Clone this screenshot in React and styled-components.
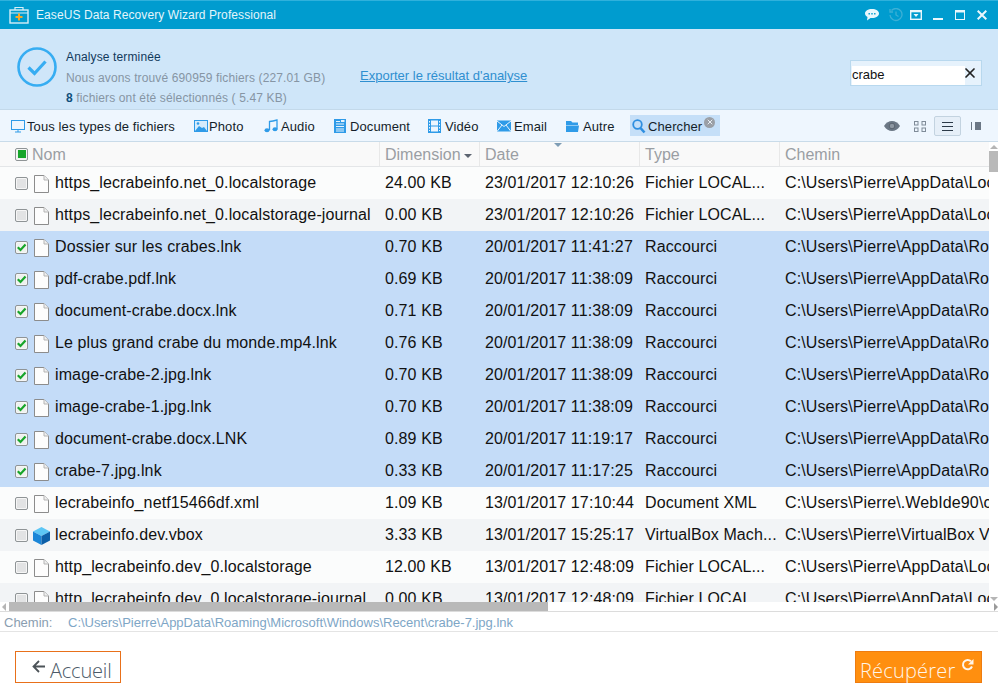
import React from 'react'
import styled, { createGlobalStyle } from 'styled-components'
import { X } from 'lucide-react'

const GlobalStyle = createGlobalStyle`
  html, body { margin: 0; padding: 0; background: #fff; }
  body { font-family: "Liberation Sans", Arial, sans-serif; }
  * { box-sizing: border-box; }
`

const Window = styled.div`
  width: 998px;
  height: 698px;
  display: flex;
  flex-direction: column;
  overflow: hidden;
  background: #fff;
`

const TitleBar = styled.div`
  height: 29px;
  flex: none;
  display: flex;
  align-items: center;
  padding: 0 11px 0 9px;
  background: #009ccf;
  border-top: 1px solid #2fb1dc;
  color: #e4f5fb;
  font-size: 12px;
  letter-spacing: 0.08px;
`

const TitleText = styled.span`
  margin-left: 7px;
  flex: 1;
`

const WinIcon = styled.span`
  display: flex;
  margin-left: ${p => p.$ml}px;
`

const Header = styled.div`
  height: 81px;
  flex: none;
  display: flex;
  align-items: flex-start;
  padding: 18px 16px 0 17px;
  background: #cfe6f9;
  border-bottom: 1px solid #c3d9ea;
`

const Summary = styled.div`
  display: flex;
  flex-direction: column;
  margin-left: 9px;
  width: 294px;
  font-size: 12px;
  line-height: 20.5px;
  letter-spacing: 0.13px;
  color: #8695a4;
`

const SummaryTitle = styled.div`
  color: #123a5c;
`

const Count = styled.b`
  color: #0f4f7c;
`

const ExportLink = styled.a`
  flex: 1;
  margin-top: 21px;
  line-height: 15px;
  font-size: 13px;
  color: #2f8fd0;
  text-decoration: underline;
`

const SearchBox = styled.div`
  width: 132px;
  height: 26px;
  margin-top: 13px;
  display: flex;
  align-items: flex-end;
  padding-left: 1px;
  background: #e6f2fc;
  border: 1px solid #b8d8ee;
  font-size: 13px;
  color: #111;
`

const SearchValue = styled.span`
  display: block;
  width: 113px;
  height: 19px;
  line-height: 17px;
  background: #fff;
`

const SearchClear = styled.span`
  display: flex;
  align-self: flex-start;
  margin: 4px 0 0 -3px;
`

const Toolbar = styled.div`
  height: 32px;
  flex: none;
  display: flex;
  align-items: center;
  padding: 1px 0 0 11px;
  background: #eef6fe;
  border-bottom: 1px solid #c9dbe9;
  font-size: 13px;
  letter-spacing: 0.1px;
  color: #141e2a;
`

const Filter = styled.div`
  width: ${p => p.$width}px;
  height: 22px;
  flex: none;
  display: flex;
  align-items: center;
  gap: ${p => p.$iconGap}px;
  white-space: nowrap;
`

const SearchFilter = styled.div`
  position: relative;
  width: 90px;
  height: 21px;
  margin-top: -2px;
  display: flex;
  align-items: center;
  gap: 2px;
  padding: 2px 0 0 2px;
  background: #c5dff8;
`

const FilterClose = styled.span`
  position: absolute;
  right: 5px;
  top: 2px;
  width: 11px;
  height: 11px;
  display: flex;
  align-items: center;
  justify-content: center;
  border-radius: 50%;
  background: #9a9fa6;
`

const ViewTools = styled.div`
  margin-left: auto;
  margin-right: 17px;
  display: flex;
  align-items: center;
`

const ToolIcon = styled.span`
  display: flex;
  margin-left: ${p => p.$ml || 0}px;
`

const ActiveToggle = styled.span`
  width: 27px;
  height: 20px;
  display: flex;
  align-items: center;
  justify-content: center;
  margin-left: 8px;
  background: #e6eff8;
  border: 1px solid #c3d3e0;
  border-radius: 2px;
`

const TableArea = styled.div`
  position: relative;
  height: 469px;
  flex: none;
  overflow: hidden;
`

const HeadRow = styled.div`
  height: 25px;
  display: grid;
  grid-template-columns: 379px 100px 160px 140px 210px;
  background: #f9f9f9;
  border-bottom: 1px solid #e4e6e8;
  font-size: 16px;
  color: #9a9ea3;
`

const HeadCell = styled.div`
  position: relative;
  display: flex;
  align-items: center;
  gap: ${p => (p.$first ? 4 : 3)}px;
  padding-top: 2px;
  padding-left: ${p => (p.$first ? 15 : 5)}px;
  border-left: ${p => (p.$first ? 'none' : '1px solid #e8e8e8')};
`

const HeadBox = styled.span`
  display: flex;
  margin-top: -2px;
`

const SortMark = styled.span`
  position: absolute;
  top: 1px;
  left: 74px;
  width: 0;
  height: 0;
  border-left: 4px solid transparent;
  border-right: 4px solid transparent;
  border-top: 4px solid #7f9db5;
`

const Caret = styled.span`
  width: 0;
  height: 0;
  margin-top: 2px;
  border-left: 4px solid transparent;
  border-right: 4px solid transparent;
  border-top: 4px solid #5c6470;
`

const Rows = styled.div`
  width: 989px;
`

const Row = styled.div`
  height: 32px;
  display: grid;
  grid-template-columns: 379px 100px 160px 140px 210px;
  align-items: center;
  font-size: 16px;
  letter-spacing: 0.12px;
  color: #111;
  white-space: nowrap;
  background: ${p => (p.$selected ? '#c4dcf8' : p.$odd ? '#f2f4f6' : '#fbfcfc')};
`

const NameCell = styled.div`
  display: flex;
  align-items: center;
  padding-left: 15px;
  height: 100%;
`

const IconSlot = styled.span`
  width: 27px;
  display: flex;
  justify-content: center;
  padding-top: 1px;
`

const Cell = styled.div`
  padding-left: 6px;
  overflow: hidden;
`

const Check = styled.span`
  width: 13px;
  height: 13px;
  flex: none;
  display: flex;
  align-items: center;
  justify-content: center;
  background: ${p => (p.$on ? '#eef2ee' : '#e2e3e4')};
  border: 1px solid #8f9496;
  border-radius: 2px;
  box-shadow: inset 0 0 0 1px #f6f6f6;
`

const HeadMark = styled.span`
  width: 8px;
  height: 8px;
  background: #17a52a;
`

const VScroll = styled.div`
  position: absolute;
  top: 0;
  right: 0;
  width: 9px;
  height: 460px;
  background: #fff;
`

const VThumb = styled.div`
  margin-top: 9px;
  height: 21px;
  background: #b9b9b9;
`

const ScrollArrow = styled.span`
  position: absolute;
  left: 1px;
  width: 0;
  height: 0;
  border-left: 4px solid transparent;
  border-right: 4px solid transparent;
  ${p => (p.$up ? 'top: 3px; border-bottom: 4px solid #b5b5b5;' : 'bottom: 1px; border-top: 4px solid #b5b5b5;')}
`

const HScroll = styled.div`
  position: absolute;
  left: 0;
  right: 0;
  bottom: 0;
  height: 9px;
  background: #fff;
`

const HThumb = styled.div`
  width: 539px;
  height: 9px;
  margin-left: 9px;
  background: #b9b9b9;
`

const ArrowLeft = styled.span`
  position: absolute;
  left: 2px;
  top: 1px;
  width: 0;
  height: 0;
  border-top: 4px solid transparent;
  border-bottom: 4px solid transparent;
  border-right: 4px solid #b5b5b5;
`

const ArrowRight = styled.span`
  position: absolute;
  right: 0;
  top: 1px;
  width: 0;
  height: 0;
  border-top: 4px solid transparent;
  border-bottom: 4px solid transparent;
  border-left: 4px solid #9a9a9a;
`

const StatusBar = styled.div`
  height: 21px;
  flex: none;
  display: flex;
  align-items: center;
  padding: 2px 0 0 4px;
  border-top: 1px solid #dcdcdc;
  border-bottom: 1px solid #e4e4e4;
  font-size: 13px;
  color: #8a9db0;
`

const StatusLabel = styled.span`
  width: 64px;
`

const StatusPath = styled.span`
  color: #7ea6c6;
`

const Footer = styled.div`
  flex: 1;
  display: flex;
  align-items: flex-start;
  justify-content: space-between;
  padding: 19px 16px 0 15px;
`

const BackButton = styled.div`
  width: 106px;
  height: 32px;
  display: flex;
  align-items: center;
  padding: 7px 0 0 16px;
  gap: 5px;
  border: 1px solid #e8701a;
  font-family: "Open Sans", sans-serif;
  font-weight: 300;
  font-size: 20px;
  letter-spacing: -0.2px;
  color: #4c5a68;
`

const RecoverButton = styled.div`
  width: 127px;
  height: 32px;
  display: flex;
  align-items: center;
  padding: 7px 0 0 4px;
  gap: 6px;
  background: #ff8f0f;
  border: 1px solid #ee7c10;
  font-family: "Open Sans", sans-serif;
  font-weight: 300;
  font-size: 20px;
  letter-spacing: 0.2px;
  color: #fff6ea;
`

const RaisedIcon = styled.svg`
  flex: none;
  margin-top: -${p => p.$lift}px;
`

const BLUE = '#2f9be8'

const BlueIcon = ({ children, width = 14 }) => (
  <svg width={width} height="14" viewBox={`0 0 ${width} 14`} fill="none">{children}</svg>
)

const FileIcon = () => (
  <svg width="15" height="18" viewBox="0 0 15 18">
    <path d="M.5.5h9.500l4.500 4.500v12.500H.5z" fill="#fdfdfd" stroke="#8c8c8c" />
    <path d="M10 .5V5h4.500" fill="#efefef" stroke="#b5b5b5" />
  </svg>
)

const CubeIcon = () => (
  <svg width="19" height="20" viewBox="0 0 19 20">
    <path d="M9.500 1l8.500 4.500L9.500 10 1 5.500z" fill="#5cc6f5" />
    <path d="M1 5.500L9.500 10v9L1 14.500z" fill="#1a86d8" />
    <path d="M18 5.500L9.500 10v9l8.500-4.500z" fill="#0c5fa8" />
  </svg>
)

const CheckMark = () => (
  <svg width="11" height="11" viewBox="0 0 11 11">
    <path d="M1.800 5.200l2.700 2.800 5-5.500" fill="none" stroke="#17a52a" strokeWidth="2.200" />
  </svg>
)

const files = [
  ['https_lecrabeinfo.net_0.localstorage', '24.00 KB', '23/01/2017 12:10:26', 'Fichier LOCAL...', 'C:\\Users\\Pierre\\AppData\\Local\\Google'],
  ['https_lecrabeinfo.net_0.localstorage-journal', '0.00 KB', '23/01/2017 12:10:26', 'Fichier LOCAL...', 'C:\\Users\\Pierre\\AppData\\Local\\Google'],
  ['Dossier sur les crabes.lnk', '0.70 KB', '20/01/2017 11:41:27', 'Raccourci', 'C:\\Users\\Pierre\\AppData\\Roaming', true],
  ['pdf-crabe.pdf.lnk', '0.69 KB', '20/01/2017 11:38:09', 'Raccourci', 'C:\\Users\\Pierre\\AppData\\Roaming', true],
  ['document-crabe.docx.lnk', '0.71 KB', '20/01/2017 11:38:09', 'Raccourci', 'C:\\Users\\Pierre\\AppData\\Roaming', true],
  ['Le plus grand crabe du monde.mp4.lnk', '0.76 KB', '20/01/2017 11:38:09', 'Raccourci', 'C:\\Users\\Pierre\\AppData\\Roaming', true],
  ['image-crabe-2.jpg.lnk', '0.70 KB', '20/01/2017 11:38:09', 'Raccourci', 'C:\\Users\\Pierre\\AppData\\Roaming', true],
  ['image-crabe-1.jpg.lnk', '0.70 KB', '20/01/2017 11:38:09', 'Raccourci', 'C:\\Users\\Pierre\\AppData\\Roaming', true],
  ['document-crabe.docx.LNK', '0.89 KB', '20/01/2017 11:19:17', 'Raccourci', 'C:\\Users\\Pierre\\AppData\\Roaming', true],
  ['crabe-7.jpg.lnk', '0.33 KB', '20/01/2017 11:17:25', 'Raccourci', 'C:\\Users\\Pierre\\AppData\\Roaming', true],
  ['lecrabeinfo_netf15466df.xml', '1.09 KB', '13/01/2017 17:10:44', 'Document XML', 'C:\\Users\\Pierre\\.WebIde90\\config'],
  ['lecrabeinfo.dev.vbox', '3.33 KB', '13/01/2017 15:25:17', 'VirtualBox Mach...', 'C:\\Users\\Pierre\\VirtualBox VMs'],
  ['http_lecrabeinfo.dev_0.localstorage', '12.00 KB', '13/01/2017 12:48:09', 'Fichier LOCAL...', 'C:\\Users\\Pierre\\AppData\\Local\\Google'],
  ['http_lecrabeinfo.dev_0.localstorage-journal', '0.00 KB', '13/01/2017 12:48:09', 'Fichier LOCAL...', 'C:\\Users\\Pierre\\AppData\\Local\\Google'],
]

const filters = [
  ['Tous les types de fichiers', 183, 2, <BlueIcon><rect x=".5" y="1.500" width="13" height="9" stroke={BLUE} /><path d="M4 13h6M7 11v2" stroke={BLUE} /></BlueIcon>],
  ['Photo', 70, 1, <BlueIcon><rect x=".5" y="1.500" width="13" height="11" stroke={BLUE} fill="#d6ecfc" /><path d="M1 12l4-5 3 2 2-1 3 4z" fill={BLUE} /><circle cx="4" cy="4.500" r="1.300" fill={BLUE} /></BlueIcon>],
  ['Audio', 70, 2, <BlueIcon width={15}><path d="M5.500 11V2.500c3-.3 5-.8 7.500-1.500V10" stroke={BLUE} strokeWidth="1.300" /><ellipse cx="3" cy="11.300" rx="2.500" ry="2" fill={BLUE} /><ellipse cx="11" cy="10.300" rx="2.500" ry="2" fill={BLUE} /></BlueIcon>],
  ['Document', 94, 4, <BlueIcon width={12}><rect width="12" height="14" fill={BLUE} /><path d="M2 2.500h4M2 5h8M2 7.500h8M2 10h8M2 12h8" stroke="#e8f4fd" /><path d="M7 2h3.500" stroke="#e8f4fd" strokeWidth="2" /></BlueIcon>],
  ['Vidéo', 69, 4, <BlueIcon width={13}><rect width="13" height="14" fill={BLUE} /><rect x="3" y="1.500" width="7" height="5" fill="#eef6fe" /><rect x="3" y="7.500" width="7" height="5" fill="#eef6fe" /><path d="M1.500 2v10M11.500 2v10" stroke="#eef6fe" strokeDasharray="1.500 1.500" /></BlueIcon>],
  ['Email', 68, 3, <BlueIcon><rect y="1.500" width="14" height="11" fill={BLUE} /><path d="M0 2l7 5.500L14 2M0 12.500l5-6.500M14 12.500L9 6" stroke="#e8f4fd" /></BlueIcon>],
  ['Autre', 65, 4, <BlueIcon width={14}><path d="M1 2h5l1.500 1.500H13V6H1z" fill={BLUE} /><path d="M1 6.500h13L13 13H1z" fill={BLUE} /></BlueIcon>],
]

const columns = ['Dimension', 'Date', 'Type', 'Chemin']

export default function App() {
  return (
    <Window>
      <GlobalStyle />
      <TitleBar>
        <svg width="20" height="18" viewBox="0 0 20 18">
          <rect x="1" y="4" width="18" height="13" fill="none" stroke="#d6eef7" strokeWidth="1.400" />
          <path d="M6 4V1.500h8V4" fill="none" stroke="#d6eef7" strokeWidth="1.200" />
          <path d="M1 7h18" stroke="#d6eef7" />
          <path d="M10 7.500v7M6.500 11h7" stroke="#f9a825" strokeWidth="2" />
        </svg>
        <TitleText>EaseUS Data Recovery Wizard Professional</TitleText>
        <WinIcon $ml={0}>
          <svg width="14" height="12" viewBox="0 0 14 12">
            <path d="M7 0C3 0 0 1.800 0 4.500 0 6 1 7.300 2.500 8L2 11.500 5.500 9c.5.100 1 .1 1.500.1 4 0 7-2 7-4.600S11 0 7 0z" fill="#eaf7fc" />
            <path d="M3.500 4.800h1.400M6.300 4.800h1.400M9.100 4.800h1.400" stroke="#009ccf" strokeWidth="1.600" />
          </svg>
        </WinIcon>
        <WinIcon $ml={10}>
          <svg width="14" height="14" viewBox="0 0 14 14" fill="none" stroke="#3cb0d6" strokeWidth="1.300">
            <path d="M2.500 2.500A6 6 0 1 1 1 7" />
            <path d="M1 1v3h3M7 3.500V7l2.500 1.500" />
          </svg>
        </WinIcon>
        <WinIcon $ml={7}>
          <svg width="12" height="10" viewBox="0 0 12 10">
            <rect x=".7" y=".7" width="10.600" height="8.600" fill="none" stroke="#eaf7fc" strokeWidth="1.400" />
            <path d="M.7 1.500h10.600" stroke="#eaf7fc" strokeWidth="1.600" />
            <path d="M3.500 4h5L6 7z" fill="#eaf7fc" />
          </svg>
        </WinIcon>
        <WinIcon $ml={11}>
          <svg width="10" height="12" viewBox="0 0 10 12">
            <path d="M0 10h10" stroke="#eaf7fc" strokeWidth="2" />
          </svg>
        </WinIcon>
        <WinIcon $ml={12}>
          <svg width="10" height="10" viewBox="0 0 10 10">
            <rect x=".5" y=".5" width="9" height="9" fill="none" stroke="#eaf7fc" />
            <path d="M.5 1.500h9" stroke="#eaf7fc" strokeWidth="2" />
          </svg>
        </WinIcon>
        <WinIcon $ml={12}>
          <svg width="10" height="10" viewBox="0 0 10 10">
            <path d="M.7.7l8.600 8.600M9.300.7L.7 9.300" stroke="#eaf7fc" strokeWidth="2" />
          </svg>
        </WinIcon>
      </TitleBar>

      <Header>
        <svg width="40" height="40" viewBox="0 0 40 40" fill="none">
          <circle cx="20" cy="20" r="18.500" stroke="#37adf2" strokeWidth="2.600" />
          <path d="M11.500 20.500l6 6 11-12" stroke="#37adf2" strokeWidth="3.200" />
        </svg>
        <Summary>
          <SummaryTitle>Analyse terminée</SummaryTitle>
          <div>Nous avons trouvé 690959 fichiers (227.01 GB)</div>
          <div><Count>8</Count> fichiers ont été sélectionnés ( 5.47 KB)</div>
        </Summary>
        <ExportLink>Exporter le résultat d'analyse</ExportLink>
        <SearchBox>
          <SearchValue>crabe</SearchValue>
          <SearchClear><X size={16} strokeWidth={2.600} color="#222" /></SearchClear>
        </SearchBox>
      </Header>

      <Toolbar>
        {filters.map(([label, width, iconGap, icon]) => (
          <Filter key={label} $width={width} $iconGap={iconGap}>{icon}{label}</Filter>
        ))}
        <SearchFilter>
          <svg width="14" height="15" viewBox="0 0 14 15" fill="none" stroke="#2f8fe0">
            <circle cx="5.500" cy="5.500" r="4.300" strokeWidth="1.800" />
            <path d="M8.500 9l4 4.500" strokeWidth="2.600" />
          </svg>
          Chercher
          <FilterClose><X size={8} strokeWidth={3} color="#e8eef4" /></FilterClose>
        </SearchFilter>
        <ViewTools>
          <ToolIcon>
            <svg width="16" height="10" viewBox="0 0 16 10">
              <path d="M0 5c2-3.200 5-5 8-5s6 1.800 8 5c-2 3.200-5 5-8 5S2 8.200 0 5z" fill="#6b7785" />
              <circle cx="8" cy="5" r="2.800" fill="#8d97a2" stroke="#59636f" />
            </svg>
          </ToolIcon>
          <ToolIcon $ml={14}>
            <svg width="12" height="11" viewBox="0 0 12 11" fill="none" stroke="#7f8b98">
              <rect x=".5" y=".5" width="3.500" height="3.500" />
              <rect x="8" y=".5" width="3.500" height="3.500" />
              <rect x=".5" y="7" width="3.500" height="3.500" />
              <rect x="8" y="7" width="3.500" height="3.500" />
            </svg>
          </ToolIcon>
          <ActiveToggle>
            <svg width="11" height="9" viewBox="0 0 11 9" stroke="#2c3a48">
              <path d="M0 .5h11M0 4.500h11M0 8.500h11" />
            </svg>
          </ActiveToggle>
          <ToolIcon $ml={10}>
            <svg width="10" height="8" viewBox="0 0 10 8">
              <path d="M.5 0v8" stroke="#6b7785" />
              <rect x="4" width="6" height="8" fill="#6b7785" />
            </svg>
          </ToolIcon>
        </ViewTools>
      </Toolbar>

      <TableArea>
        <HeadRow>
          <HeadCell $first>
            <HeadBox><Check $on><HeadMark /></Check></HeadBox>
            Nom
          </HeadCell>
          {columns.map(col => (
            <HeadCell key={col}>
              {col}
              {col === 'Dimension' && <Caret />}
              {col === 'Date' && <SortMark />}
            </HeadCell>
          ))}
        </HeadRow>
        <Rows>
          {files.map((f, i) => (
            <Row key={f[0]} $selected={f[5]} $odd={i % 2 === 1}>
              <NameCell>
                <Check $on={f[5]}>{f[5] && <CheckMark />}</Check>
                <IconSlot>{f[0].endsWith('.vbox') ? <CubeIcon /> : <FileIcon />}</IconSlot>
                {f[0]}
              </NameCell>
              <Cell>{f[1]}</Cell>
              <Cell>{f[2]}</Cell>
              <Cell>{f[3]}</Cell>
              <Cell>{f[4]}</Cell>
            </Row>
          ))}
        </Rows>
        <VScroll>
          <ScrollArrow $up />
          <VThumb />
          <ScrollArrow />
        </VScroll>
        <HScroll>
          <ArrowLeft />
          <HThumb />
          <ArrowRight />
        </HScroll>
      </TableArea>

      <StatusBar>
        <StatusLabel>Chemin:</StatusLabel>
        <StatusPath>C:\Users\Pierre\AppData\Roaming\Microsoft\Windows\Recent\crabe-7.jpg.lnk</StatusPath>
      </StatusBar>

      <Footer>
        <BackButton>
          <RaisedIcon $lift={9} width="13" height="13" viewBox="0 0 13 13" fill="none" stroke="#4c5358" strokeWidth="1.800">
            <path d="M13 6.500H2M7 1L1.500 6.500 7 12" />
          </RaisedIcon>
          Accueil
        </BackButton>
        <RecoverButton>
          Récupérer
          <RaisedIcon $lift={12} width="13" height="13" viewBox="0 0 13 13">
            <path d="M10 3.300A4.700 4.700 0 1 0 11 8.500" fill="none" stroke="#fff6ea" strokeWidth="2" />
            <path d="M12.500 1v5.500H7z" fill="#fff6ea" />
          </RaisedIcon>
        </RecoverButton>
      </Footer>
    </Window>
  )
}
